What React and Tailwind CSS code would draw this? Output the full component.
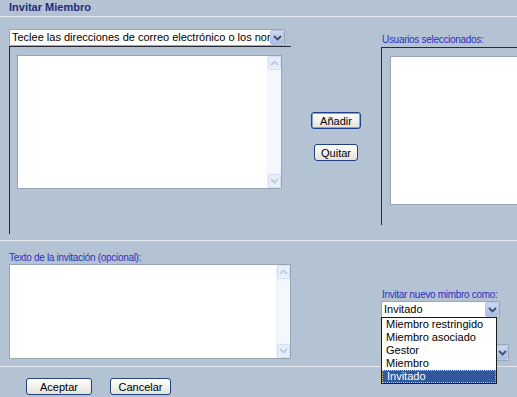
import React from 'react';

const font = { fontFamily: '"Liberation Sans", Arial, sans-serif' };

function Chevron({ down = true, className = '' }) {
    return (
        <svg width="9" height="6" viewBox="0 0 9 6" className={className}>
            <path d={down ? 'M1 1 L4.5 4.5 L8 1' : 'M1 5 L4.5 1.5 L8 5'} fill="none" stroke="currentColor" strokeWidth="1.8" />
        </svg>
    );
}

function Scrollbar() {
    return (
        <div className="w-[14px] h-full flex flex-col bg-[#f4f7fc] border-l border-[#eef2f9]">
            <div className="h-[14px] flex items-center justify-center bg-[#e9effa] border border-[#d3def3] rounded-[2px] text-[#bccbe6]">
                <Chevron down={false} />
            </div>
            <div className="flex-1"></div>
            <div className="h-[14px] flex items-center justify-center bg-[#e9effa] border border-[#d3def3] rounded-[2px] text-[#bccbe6]">
                <Chevron />
            </div>
        </div>
    );
}

function TextBox({ className }) {
    return (
        <div className={`bg-white border border-[#98a4b0] flex justify-end ${className}`}>
            <Scrollbar />
        </div>
    );
}

function Select({ text, className, arrowClass = 'w-[14px]' }) {
    return (
        <div className={`h-[17px] shrink-0 flex bg-white border border-[#9aa7b6] ${className}`}>
            <div className="flex-1 overflow-hidden whitespace-nowrap text-[11px] leading-[15px] pl-[2px] text-black">{text}</div>
            <div className={`${arrowClass} h-[15px] shrink-0 flex items-center justify-center bg-gradient-to-b from-[#cdd9f3] to-[#a9bde2] border border-[#b5c5e4] rounded-[2px] text-[#3c4d70]`}>
                <Chevron />
            </div>
        </div>
    );
}

function XPButton({ children, className, focused = false }) {
    return (
        <button className={`h-[17px] rounded-[3px] border ${focused ? 'border-[#1f3f8a] shadow-[inset_0_0_0_1px_#7ea4e6]' : 'border-[#24407a]'} bg-gradient-to-b from-white to-[#e3e3dc] text-[11px] leading-[14px] text-black ${className}`}>
            {children}
        </button>
    );
}

export default function App() {
    return (
        <div className="w-[517px] h-[397px] bg-[#b4c3d3] overflow-hidden relative flex flex-col" style={font}>
            {/* Header */}
            <div className="h-[16px] pl-[9px] text-[11px] leading-[15px] font-bold text-[#1f2a7c]">Invitar Miembro</div>
            <div className="h-px bg-[#e3e8ee]"></div>

            {/* Top section */}
            <div className="h-[223px] flex">
                <div className="ml-[9px] w-[282px] shrink-0 pt-[12px] flex flex-col">
                    <Select text="Teclee las direcciones de correo electrónico o los nom" className="w-[276px]" />
                    <div className="h-[188px] border-l border-t border-[#262b36]">
                        <TextBox className="ml-[7px] mt-[8px] w-[265px] h-[134px]" />
                    </div>
                </div>
                <div className="w-[90px] shrink-0 pt-[95px] flex flex-col items-center gap-[15px]">
                    <XPButton focused className="w-[50px]">Añadir</XPButton>
                    <XPButton className="w-[44px]">Quitar</XPButton>
                </div>
                <div className="flex-1 min-w-0 pt-[17px] flex flex-col">
                    <div className="h-[13px] pl-px text-[10px] leading-[12px] tracking-[-0.3px] text-[#2e2fc4] whitespace-nowrap">Usuarios seleccionados:</div>
                    <div className="h-[178px] border-l border-t border-[#262b36] overflow-hidden">
                        <div className="ml-[8px] mt-[8px] w-[140px] h-[149px] bg-white border border-[#98a4b0]"></div>
                    </div>
                </div>
            </div>
            <div className="h-px bg-[#e3e8ee]"></div>

            {/* Bottom section */}
            <div className="h-[125px] flex">
                <div className="ml-[9px] w-[282px] shrink-0 pt-[11px] flex flex-col">
                    <div className="h-[12px] text-[10px] leading-[12px] tracking-[-0.3px] text-[#2e2fc4] whitespace-nowrap">Texto de la invitación (opcional):</div>
                    <TextBox className="w-[282px] h-[95px]" />
                </div>
                <div className="ml-[90px] shrink-0 pt-[48px] flex flex-col">
                    <div className="h-[12px] pl-px text-[10px] leading-[12px] tracking-[-0.3px] text-[#2e2fc4] whitespace-nowrap">Invitar nuevo mimbro como:</div>
                    <Select text="Invitado" className="w-[119px]" />
                    <Select text="" className="w-[128px] mt-[26px]" arrowClass="w-[12px]" />
                </div>
            </div>
            <div className="h-px bg-[#e3e8ee]"></div>

            {/* Footer buttons */}
            <div className="pl-[26px] pt-[11px] flex gap-[18px]">
                <XPButton className="w-[66px]">Aceptar</XPButton>
                <XPButton className="w-[61px]">Cancelar</XPButton>
            </div>

            {/* Open dropdown list */}
            <div className="absolute left-[381px] top-[317px] w-[116px] bg-white border border-[#1b1b1b] text-[11px] leading-[13px] text-black">
                <div className="h-[13px] pl-[4px]">Miembro restringido</div>
                <div className="h-[13px] pl-[4px]">Miembro asociado</div>
                <div className="h-[13px] pl-[4px]">Gestor</div>
                <div className="h-[13px] pl-[4px]">Miembro</div>
                <div className="h-[13px] pl-[4px] bg-[#31579c] text-white border border-dotted border-[#d8c98a] leading-[11px]">Invitado</div>
            </div>
        </div>
    );
}
